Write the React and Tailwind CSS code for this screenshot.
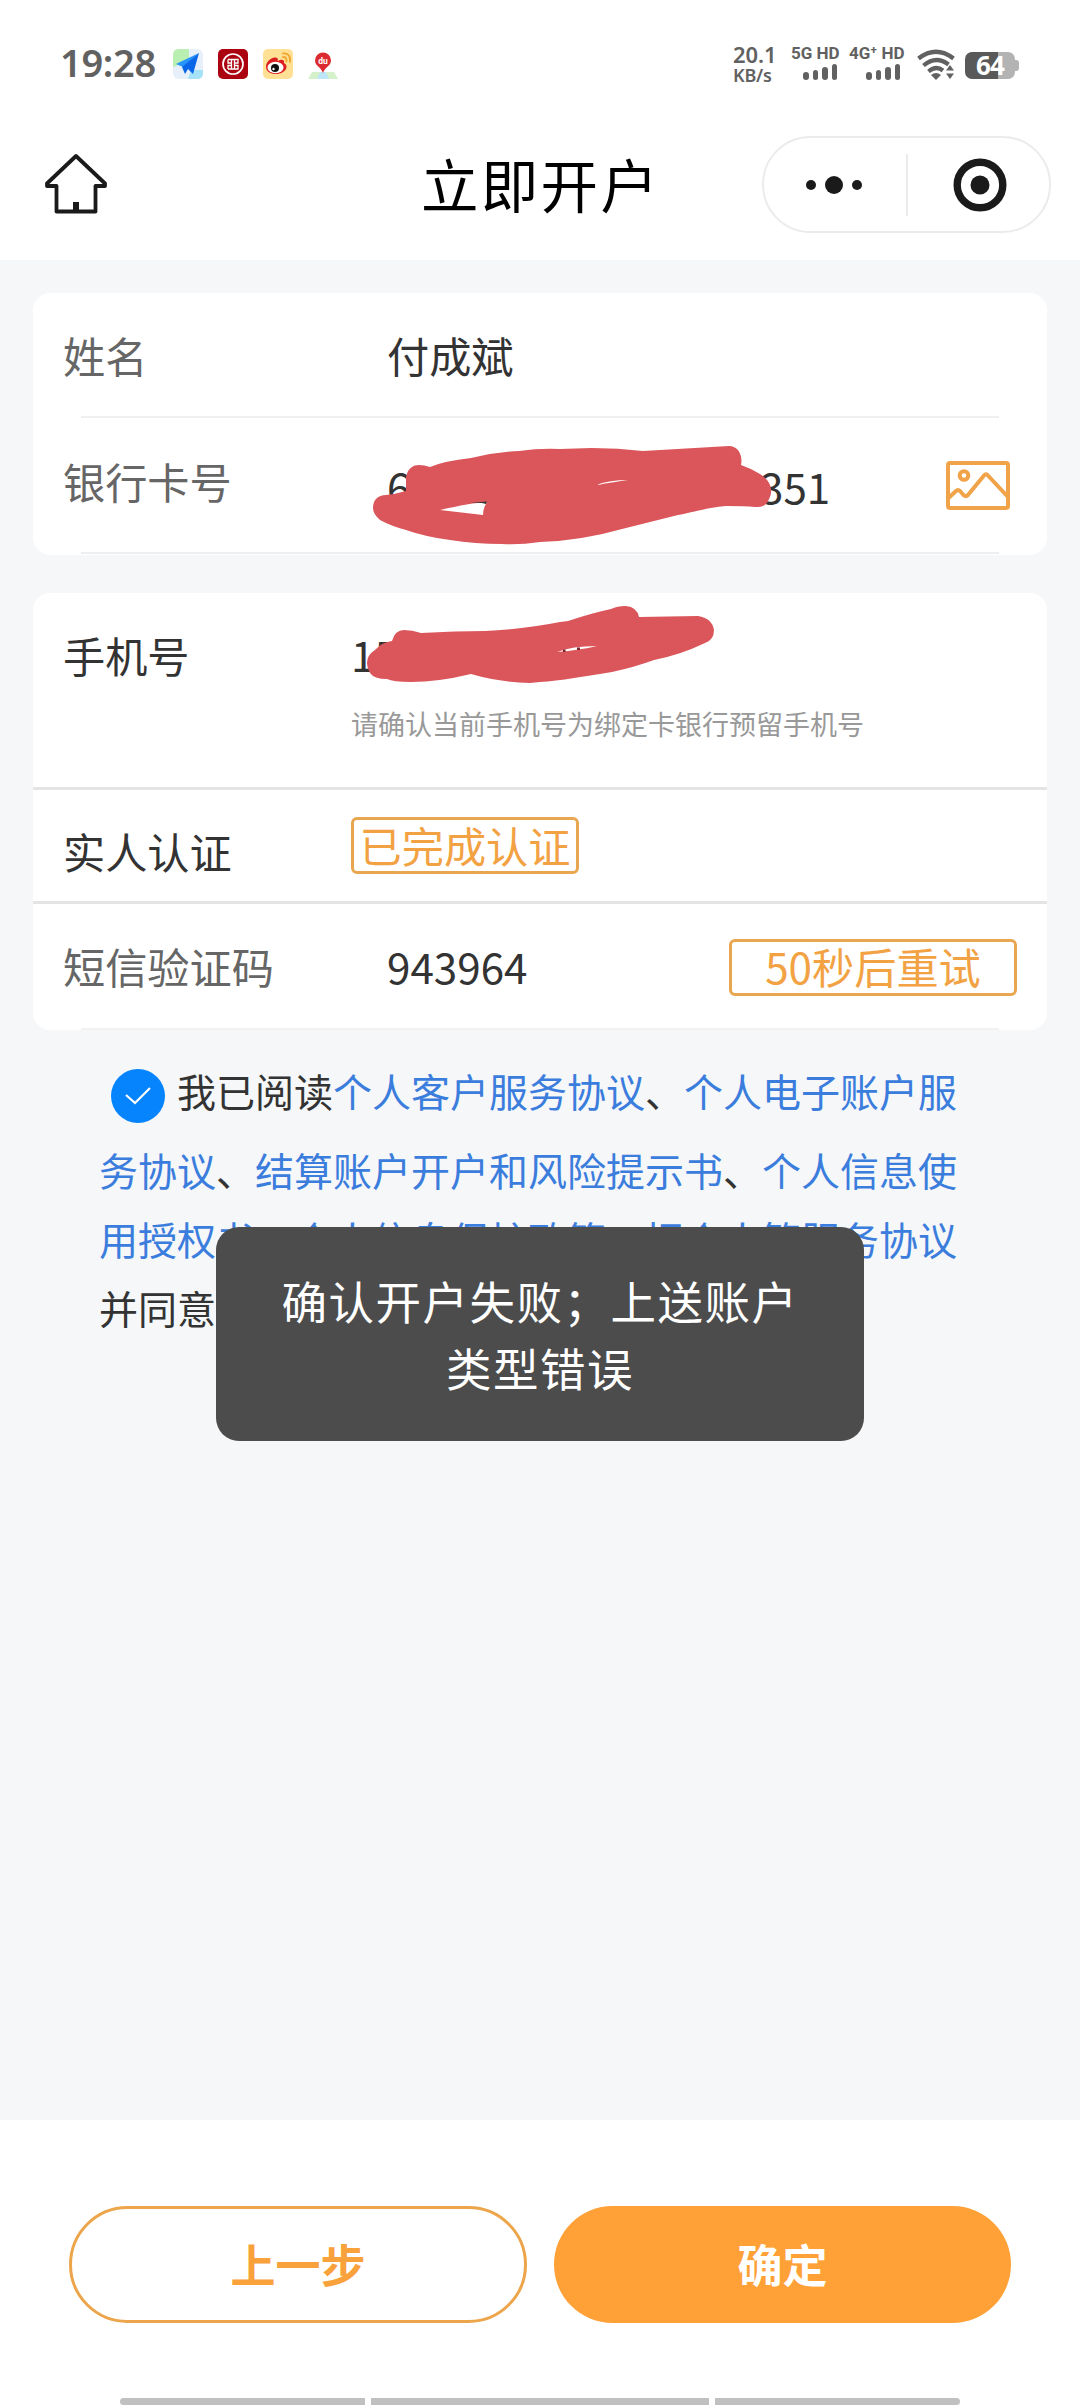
import React from "react";

const orange = "text-[#f2a243]";

function StatusBar() {
  const bars = [8, 10, 13, 16];
  return (
    <div className="flex h-[104px] items-start bg-white pl-[60px] text-[#616161] font-['Noto_Sans',sans-serif]">
      <div className="mt-[36px] w-[113px] whitespace-nowrap text-[38px] font-semibold leading-[52px] tracking-[-0.3px]">19:28</div>
      <div className="mt-[49px] flex gap-[15px]">
        <svg width="30" height="30" viewBox="0 0 30 30">
          <rect width="30" height="30" rx="6" fill="#e6effa" />
          <path d="M6 0H16V12L0 18V6Q0 0 6 0Z" fill="#b9efb0" />
          <path d="M15 30L18 21H30V24Q30 30 24 30Z" fill="#a5e2f8" />
          <path d="M26 4L3 15L10 18Z" fill="#2594fb" />
          <path d="M26 4L20 25L15 20L12 25L9 18Z" fill="#0a66e8" />
        </svg>
        <svg width="30" height="30" viewBox="0 0 30 30">
          <rect width="30" height="30" rx="5" fill="#ab0410" />
          <circle cx="15" cy="15" r="10" fill="none" stroke="#fff" strokeWidth="1.7" />
          <path d="M10 10.5H20V14H17M10 10.5V14H13M10 20H20V16.5H17M10 20V16.5H13M13.5 10.5V20M16.5 10.5V20" fill="none" stroke="#fff" strokeWidth="1.3" />
        </svg>
        <svg width="30" height="30" viewBox="0 0 30 30">
          <rect width="30" height="30" rx="5" fill="#ffe095" />
          <path d="M3 18C3 12 10 7 14 9C16 10 14 12 15 12C18 10 22 10 21 14C25 16 24 21 20 23C14 27 3 25 3 18Z" fill="#dc1e20" />
          <ellipse cx="12.5" cy="18.5" rx="8" ry="5.7" fill="#fff" />
          <circle cx="12" cy="19" r="4" fill="#111" />
          <circle cx="10.5" cy="20" r="1.2" fill="#fff" />
          <path d="M20 8Q24 8 23.500 12.500M20 4.500Q28 4 27 13" fill="none" stroke="#f2a62c" strokeWidth="1.8" strokeLinecap="round" />
        </svg>
        <svg width="30" height="30" viewBox="0 0 30 30">
          <path d="M4 23H12L10 30H0Z" fill="#d5f1c9" />
          <path d="M18 23H26L30 30H20Z" fill="#d5f1c9" />
          <path d="M12 23H18L21 30H9Z" fill="#bde6f8" />
          <path d="M15 24C13 18 7 17 7 11.500A8 8 0 0 1 23 11.500C23 17 17 18 15 24Z" fill="#db2b31" />
          <text x="15" y="15" textAnchor="middle" fontSize="8.500" fontWeight="700" fill="#fff" fontFamily="Roboto">du</text>
        </svg>
      </div>
      <div className="ml-[395px] mt-[44px] w-[58px] whitespace-nowrap font-semibold">
        <div className="text-[22px] leading-[21px] tracking-[-0.1px]">20.1</div>
        <div className="text-[18px] leading-[20px] tracking-[-0.2px]">KB/s</div>
      </div>
      <div className="mt-[44px] w-[58px]">
        <div className="whitespace-nowrap font-[Roboto] text-[17px] font-bold leading-[19px]">5G HD</div>
        <div className="ml-[12px] mt-[1px] flex h-[16px] items-end gap-[4px]">
          {bars.map((h) => <i key={h} className="w-[5.600px] rounded-[3px] bg-[#616161]" style={{ height: h }} />)}
        </div>
      </div>
      <div className="mt-[44px] w-[68px]">
        <div className="whitespace-nowrap font-[Roboto] text-[17px] font-bold leading-[19px]">4G⁺ HD</div>
        <div className="ml-[17px] mt-[1px] flex h-[16px] items-end gap-[4px]">
          {bars.map((h) => <i key={h} className="w-[5.600px] rounded-[3px] bg-[#616161]" style={{ height: h }} />)}
        </div>
      </div>
      <svg className="mt-[49px]" width="40" height="31" viewBox="0 0 40 31">
        <g fill="none" stroke="#616161" strokeWidth="4.200">
          <path d="M1.500 9.500Q19 -4 36.500 9.500" />
          <path d="M6.500 16.500Q19 6 31.500 15.500" />
          <path d="M11.500 22.500Q19 16 26 21.500" />
        </g>
        <path d="M14 26Q19 22 24 26L19 31Z" fill="#616161" />
        <path d="M29 21.500L33 16L37 21.500ZM29 24.500H37L33 30Z" fill="#616161" />
      </svg>
      <div className="ml-[8px] mt-[52px] flex items-center">
        <div className="flex h-[27px] w-[50px] items-center justify-center rounded-[7px] bg-[linear-gradient(90deg,#595959_66%,#b3b3b3_66%)] text-[26px] font-bold leading-[27px] tracking-[-0.8px] text-white">64</div>
        <div className="h-[11px] w-[4px] rounded-r-[3px] bg-[#b3b3b3]" />
      </div>
    </div>
  );
}

function NavBar() {
  return (
    <div className="flex h-[156px] items-start bg-white">
      <svg className="ml-[44px] mt-[49px]" width="64" height="62" viewBox="0 0 64 62" fill="none" stroke="#1a1a1a" strokeWidth="3.800" strokeLinejoin="round" strokeLinecap="round">
        <path d="M32 3L3 30.500V33H12.500V58.500H51.500V33H61V30.500Z" />
        <path d="M32 49V57" strokeWidth="6" strokeLinecap="butt" />
      </svg>
      <h1 className="ml-[313px] mt-[39px] w-[341px] text-[57.500px] font-normal leading-[80px] tracking-[2.300px] text-black">立即开户</h1>
      <div className="mt-[32px] flex h-[97px] w-[289px] items-center rounded-full border-2 border-[#ebebeb]">
        <svg width="142" height="60" viewBox="0 0 142 60" fill="#1a1a1a">
          <circle cx="47" cy="30" r="5" />
          <circle cx="70" cy="30" r="9" />
          <circle cx="93" cy="30" r="5" />
        </svg>
        <div className="h-[62px] w-[2px] bg-[#ebebeb]" />
        <svg width="141" height="60" viewBox="0 0 141 60" fill="#1a1a1a">
          <circle cx="72" cy="30" r="9.500" />
          <circle cx="72" cy="30" r="22.800" fill="none" stroke="#1a1a1a" strokeWidth="7.400" />
        </svg>
      </div>
    </div>
  );
}

function CardInfo() {
  return (
    <section className="relative mt-[33px] h-[262px] rounded-[17px] bg-white px-[30px] text-[42.200px] leading-[60px]">
      <div className="flex h-[123px] items-center text-[#666]">
        <span className="w-[324px]">姓名</span>
        <span className="text-[#333]">付成斌</span>
      </div>
      <div className="mx-[18px] h-[2px] bg-[#efefef]" />
      <div className="flex h-[134px] items-center">
        <span className="w-[324px] pb-[8px] text-[#666]">银行卡号</span>
        <span className="w-[373px] pt-[1px] text-[#333]">6</span>
        <span className="pt-[1px] text-[#333]">351</span>
        <svg className="ml-auto mr-[7px]" width="64" height="50" viewBox="0 0 64 50" fill="none" stroke="#f0a348" strokeWidth="4">
          <rect x="2" y="3" width="60" height="45" rx="2" />
          <circle cx="18" cy="15.500" r="4.300" />
          <path d="M2 38.500L10 31Q12 29 14 31L18 35.500Q20 37 22 35L38 15.500Q40 13 42 15.500L62 37" />
        </svg>
      </div>
      <div className="mx-[18px] h-[2px] bg-[#efefef]" />
      <svg className="absolute left-[337px] top-[147px]" width="410" height="110" viewBox="370 440 410 110">
        <path fill="#db565b" fillRule="evenodd" d="M373 508C373 500 378 495 386 495Q396 494 406 491V477C408 468 413 465 419 465Q424 465 430 467Q444 461 471 458Q495 452 519 451Q540 448 560 449L592 448Q618 448 643 451L729 446C738 446 743 455 741 465Q750 468 760 474C770 480 774 490 769 499Q766 508 755 507Q744 506 726 506C705 508 695 512 678 515Q650 522 626 528Q580 541 540 542Q520 545 502 544Q475 544 450 540Q426 537 406 530Q391 526 380 520Q373 514 373 508ZM440 510L483 515Q483 508 487 502Q470 503 440 510Z" />
        <path d="M470 503L487 501.500L486 504L482 503Z" fill="#333" />
        <path d="M596 485Q610 480 628 480Q615 482 596 485Z" fill="#fff" />
      </svg>
    </section>
  );
}

function VerifyInfo() {
  return (
    <section className="relative mt-[38px] h-[437px] rounded-[17px] bg-white text-[42.200px] leading-[60px] text-[#333]">
      <div className="flex h-[194px] px-[30px] pt-[31px]">
        <span className="w-[288px] pt-[1px]">手机号</span>
        <div>
          <div>15</div>
          <div className="mt-[20px] text-[27px] leading-[40px] text-[#999]">请确认当前手机号为绑定卡银行预留手机号</div>
        </div>
      </div>
      <div className="h-[3px] bg-[#e4e4e4]" />
      <div className="flex h-[111px] items-start px-[30px] pt-[27px]">
        <span className="w-[288px] pt-[4px]">实人认证</span>
        <span className={`flex h-[57px] w-[228px] items-center justify-center rounded-[6px] border-3 border-[#e9a650] pb-[1px] ${orange}`}>已完成认证</span>
      </div>
      <div className="h-[3px] bg-[#e4e4e4]" />
      <div className="flex h-[124px] items-center px-[30px]">
        <span className="w-[324px] pb-[1px] text-[#666]">短信验证码</span>
        <span className="pb-[1px]">943964</span>
        <span className={`relative top-[1px] ml-auto flex h-[57px] w-[288px] items-center justify-center rounded-[6px] border-3 border-[#e9a650] pb-[3px] ${orange}`}>50秒后重试</span>
      </div>
      <div className="mx-[48px] h-[2px] bg-[#f2f2f2]" />
      <svg className="absolute left-[327px] top-[7px]" width="360" height="90" viewBox="360 600 360 90">
        <path fill="#db565b" d="M367 663Q367 655 375 650Q382 642 392 641Q395 630 404 630Q412 630 421 633Q455 631 485 631Q525 629 560 622L568 621Q592 613 611 609Q617 606 626 606Q637 607 639 617L698 616Q712 618 714 630Q714 640 705 643Q680 655 654 660Q635 667 612 672Q594 675 574 678Q555 681 540 682L530 683Q498 682 471 674Q438 682 411 682Q393 682 387 679Q374 679 370 673Q367 668 367 663Z" />
        <path d="M557 652Q572 646 597 646Q580 650 557 652Z" fill="#fff" />
        <path d="M563 649.500H565.500V652H563ZM577 647.500H580V650H577Z" fill="#7a2530" />
      </svg>
    </section>
  );
}

const Link = ({ children }) => <span className="text-[#3b7ddd]">{children}</span>;

function Agreement() {
  return (
    <div className="ml-[66px] mt-[21px] w-[860px] whitespace-nowrap text-[39px] leading-[69px] text-[#333]">
      <div className="flex h-[84px] items-center">
        <span className="ml-[12px] mr-[12px] mt-[5px] flex h-[54px] w-[54px] items-center justify-center rounded-full bg-[#0584fe]">
          <svg width="26" height="20" viewBox="0 0 26 20" fill="none" stroke="#fff" strokeWidth="2.200"><path d="M1 9L10 17L25 2" /></svg>
        </span>
        <div className="pb-[5px]">我已阅读<Link>个人客户服务协议</Link>、<Link>个人电子账户服</Link></div>
      </div>
      <div><Link>务协议</Link>、<Link>结算账户开户和风险提示书</Link>、<Link>个人信息使</Link></div>
      <div><Link>用授权书</Link>、<Link>个人信息保护政策</Link>、<Link>把个人管服务协议</Link></div>
      <div>并同意</div>
    </div>
  );
}

function Toast() {
  return (
    <div className="absolute left-[216px] top-[1227px] flex h-[214px] w-[648px] flex-col items-center justify-center rounded-[23px] bg-[#4c4c4c] text-[45.500px] leading-[67px] tracking-[1.500px] text-white">
      <div>确认开户失败；上送账户</div>
      <div>类型错误</div>
    </div>
  );
}

export default function App() {
  return (
    <div className="relative flex h-[2408px] w-[1080px] flex-col overflow-hidden bg-white font-['Noto_Sans_CJK_SC',sans-serif]">
      <StatusBar />
      <NavBar />
      <main className="flex h-[1860px] flex-col bg-[#f5f7f9] px-[33px]">
        <CardInfo />
        <VerifyInfo />
        <Agreement />
      </main>
      <footer className="flex h-[278px] items-start gap-[27px] pl-[69px] pt-[86px] text-[45px] font-bold leading-[60px]">
        <button className="h-[117px] w-[458px] rounded-full border-3 border-[#eda54c] pb-[1px] text-[#f9a13a]">上一步</button>
        <button className="h-[117px] w-[457px] rounded-full bg-[#ffa137] pb-[1px] text-white">确定</button>
      </footer>
      <div className="flex h-[7px] justify-center gap-[6px]">
        <i className="w-[245px] rounded-l-[4px] bg-[#c0c0c0]" />
        <i className="w-[338px] bg-[#c0c0c0]" />
        <i className="w-[245px] rounded-r-[4px] bg-[#c0c0c0]" />
      </div>
      <Toast />
    </div>
  );
}
